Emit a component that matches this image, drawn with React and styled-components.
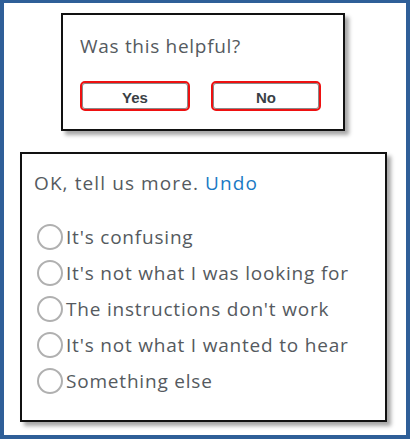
import React, { useState } from 'react';
import styled, { createGlobalStyle } from 'styled-components';

const GlobalStyle = createGlobalStyle`
  html, body {
    margin: 0;
    padding: 0;
    background: #ffffff;
  }
  * {
    box-sizing: border-box;
  }
`;

const textFont = `"Open Sans", Lato, sans-serif`;

const Frame = styled.div`
  width: 410px;
  height: 439px;
  border: 4px solid #2f5f98;
  border-top-width: 3px;
  display: flex;
  flex-direction: column;
  align-items: flex-start;
  padding-top: 10px;
  background: #ffffff;
`;

const Card = styled.div`
  width: ${(p) => p.$width}px;
  height: ${(p) => p.$height}px;
  margin-left: ${(p) => p.$left}px;
  margin-bottom: ${(p) => p.$bottom || 0}px;
  border: 2px solid #111;
  background: #fff;
  box-shadow: 4px 4px 4px rgba(0, 0, 0, 0.35);
  padding: ${(p) => p.$padding};
  display: flex;
  flex-direction: column;
`;

const Question = styled.div`
  font-family: ${textFont};
  font-size: 19px;
  color: #555a60;
  line-height: 22px;
  letter-spacing: 0.7px;
`;

const ButtonRow = styled.div`
  display: flex;
  gap: 21px;
  margin-top: 24px;
`;

const VoteButton = styled.button`
  width: 110px;
  height: 30px;
  border: 2px solid #ee1111;
  border-radius: 5px;
  box-shadow: inset 0 0 0 1px #8a8a8a;
  background: #fff;
  font-family: "Liberation Sans", Arial, sans-serif;
  font-weight: bold;
  font-size: 15px;
  color: #3a3f45;
  cursor: pointer;
  padding: 2px 0 0;
`;

const Prompt = styled.div`
  font-family: ${textFont};
  font-size: 19px;
  color: #555a60;
  line-height: 22px;
  letter-spacing: 1.1px;
  margin-bottom: 30px;
`;

const UndoLink = styled.a`
  color: #1a7ac4;
  text-decoration: none;
  cursor: pointer;
`;

const OptionList = styled.div`
  display: flex;
  flex-direction: column;
  gap: 10px;
`;

const Option = styled.label`
  display: flex;
  align-items: center;
  height: 26px;
  font-family: ${textFont};
  font-size: 19px;
  letter-spacing: 0.8px;
  color: #555a60;
  cursor: pointer;
`;

const Circle = styled.span`
  width: 26px;
  height: 26px;
  border-radius: 50%;
  border: 2px solid #b0b0b0;
  margin-left: 3px;
  margin-right: 3px;
  flex-shrink: 0;
  background: ${(p) => (p.$checked ? 'radial-gradient(#1a7ac4 0 5px, #fff 6px)' : '#fff')};
`;

const options = [
  "It's confusing",
  "It's not what I was looking for",
  "The instructions don't work",
  "It's not what I wanted to hear",
  'Something else',
];

const App = () => {
  const [selected, setSelected] = useState(null);

  return (
    <>
      <GlobalStyle />
      <Frame>
        <Card $width={284} $height={118} $left={57} $bottom={21} $padding="20px 17px">
          <Question>Was this helpful?</Question>
          <ButtonRow>
            <VoteButton>Yes</VoteButton>
            <VoteButton>No</VoteButton>
          </ButtonRow>
        </Card>
        <Card $width={367} $height={270} $left={16} $padding="18px 12px">
          <Prompt>
            OK, tell us more. <UndoLink>Undo</UndoLink>
          </Prompt>
          <OptionList>
            {options.map((text, i) => (
              <Option key={text} onClick={() => setSelected(i)}>
                <Circle $checked={selected === i} />
                {text}
              </Option>
            ))}
          </OptionList>
        </Card>
      </Frame>
    </>
  );
};

export default App;
